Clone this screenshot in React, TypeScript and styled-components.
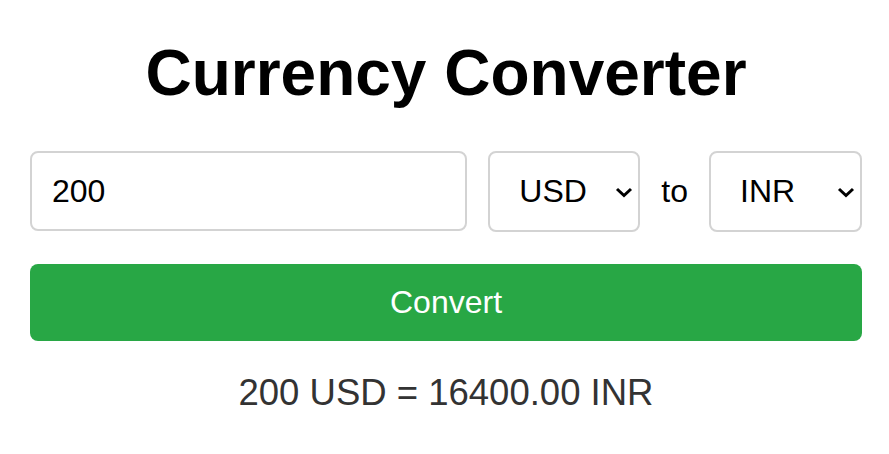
import React, { useState } from "react";
import styled, { createGlobalStyle } from "styled-components";

const GlobalStyle = createGlobalStyle`
  body {
    margin: 0;
    background: #ffffff;
    font-family: "Liberation Sans", Arial, sans-serif;
  }
`;

const Page = styled.div`
  width: 832px;
  margin-left: 30px;
  display: flex;
  flex-direction: column;
`;

const Title = styled.h1`
  margin: 37px 0 0;
  font-size: 64px;
  line-height: 1.15;
  font-weight: 700;
  text-align: center;
  color: #000;
`;

const Row = styled.div`
  margin-top: 40px;
  display: flex;
  align-items: center;
  gap: 21px;
`;

const AmountInput = styled.input`
  flex: 1;
  min-width: 0;
  height: 80px;
  box-sizing: border-box;
  padding: 0 20px;
  border: 2px solid #d3d3d3;
  border-radius: 8px;
  font-family: inherit;
  font-size: 32px;
  color: #000;
  outline: none;
`;

const SelectWrap = styled.div<{ $width: number }>`
  position: relative;
  width: ${(p) => p.$width}px;
  height: 81px;
`;

const Select = styled.select`
  appearance: none;
  width: 100%;
  height: 100%;
  box-sizing: border-box;
  padding: 0 0 0 29px;
  border: 2px solid #d3d3d3;
  border-radius: 8px;
  background: #fff;
  font-family: inherit;
  font-size: 32px;
  color: #000;
  outline: none;
`;

const Chevron = styled.svg`
  position: absolute;
  right: 7px;
  top: 36px;
  width: 18px;
  height: 11px;
  pointer-events: none;
`;

const ToLabel = styled.span`
  font-size: 32px;
  color: #000;
`;

const ConvertButton = styled.button`
  margin-top: 32px;
  height: 77px;
  border: none;
  border-radius: 8px;
  background: #28a745;
  color: #fff;
  font-family: inherit;
  font-size: 32px;
  cursor: pointer;
`;

const Result = styled.p`
  margin: 31px 0 0;
  font-size: 36.5px;
  line-height: 1.15;
  text-align: center;
  color: #333;
`;

const currencies = ["USD", "INR", "EUR", "GBP", "JPY"];

const CurrencySelect = ({
  value,
  width,
  onChange,
}: {
  value: string;
  width: number;
  onChange: (v: string) => void;
}) => (
  <SelectWrap $width={width}>
    <Select value={value} onChange={(e) => onChange(e.target.value)}>
      {currencies.map((c) => (
        <option key={c} value={c}>
          {c}
        </option>
      ))}
    </Select>
    <Chevron viewBox="0 0 18 11">
      <polyline
        points="2,2 9,8.5 16,2"
        fill="none"
        stroke="#000"
        strokeWidth="3"
      />
    </Chevron>
  </SelectWrap>
);

const App = () => {
  const [amount, setAmount] = useState("200");
  const [from, setFrom] = useState("USD");
  const [to, setTo] = useState("INR");

  return (
    <Page>
      <GlobalStyle />
      <Title>Currency Converter</Title>
      <Row>
        <AmountInput value={amount} onChange={(e) => setAmount(e.target.value)} />
        <CurrencySelect value={from} width={152} onChange={setFrom} />
        <ToLabel>to</ToLabel>
        <CurrencySelect value={to} width={153} onChange={setTo} />
      </Row>
      <ConvertButton>Convert</ConvertButton>
      <Result>200 USD = 16400.00 INR</Result>
    </Page>
  );
};

export default App;
